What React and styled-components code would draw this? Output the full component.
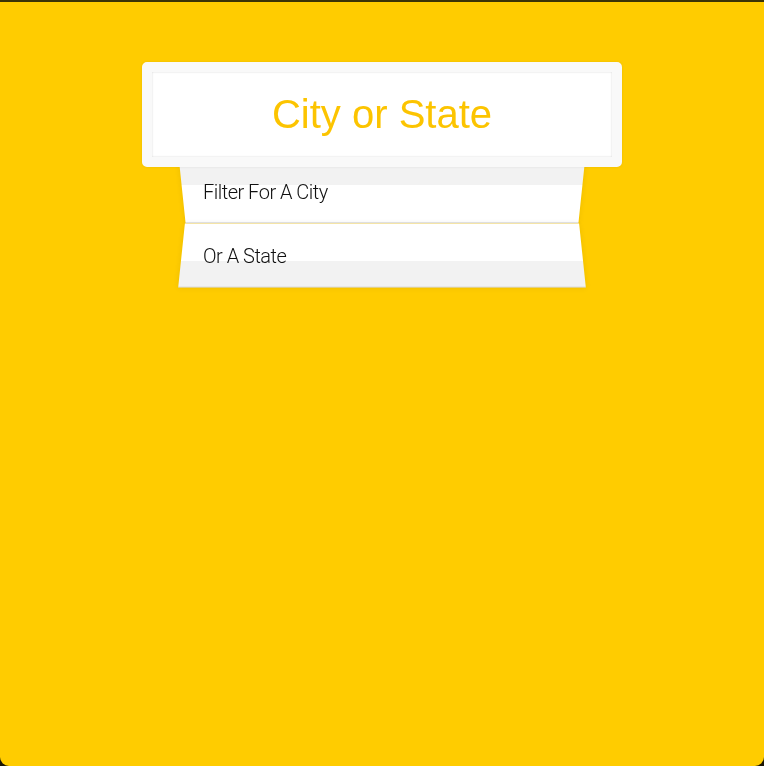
import React from 'react';
import styled, { createGlobalStyle } from 'styled-components';

const GlobalStyle = createGlobalStyle`
  *, *::before, *::after { box-sizing: border-box; }
  html {
    background: #1c1604;
  }
  body {
    margin: 0;
    font-family: "Liberation Sans", Arial, sans-serif;
    font-size: 20px;
    font-weight: 200;
  }
`;

const Frame = styled.div`
  height: 766px;
  background: #ffcc00;
  border-top: 2px solid #3b3306;
  border-radius: 0 0 9px 9px;
  padding-top: 50px;
  overflow: hidden;
`;

const SearchForm = styled.form`
  max-width: 400px;
  margin: 0 auto;
`;

const SearchInput = styled.input`
  display: block;
  position: relative;
  z-index: 2;
  width: 120%;
  margin: 10px -10% -10px;
  padding: 20px;
  text-align: center;
  outline: 0;
  border: 10px solid #f9f9f9;
  border-radius: 5px;
  background: #fff;
  font-family: "Liberation Sans", Arial, sans-serif;
  font-size: 40px;
  box-shadow: 0 0 3px rgba(0, 0, 0, 0.08), inset 0 0 2px rgba(0, 0, 0, 0.19);

  &::placeholder {
    color: #fcc400;
    opacity: 1;
  }
`;

const Suggestions = styled.ul`
  margin: 0;
  padding: 0;
  position: relative;
`;

// the folded paper is drawn on ::before so the text itself stays flat
const Suggestion = styled.li`
  position: relative;
  isolation: isolate;
  list-style: none;
  margin: 0;
  padding: 24px 21px 17px;
  display: flex;
  justify-content: space-between;
  text-transform: capitalize;
  font-family: Roboto, "Liberation Sans", sans-serif;
  font-weight: 300;
  letter-spacing: -0.5px;
  color: #111;
  line-height: 23px;

  &::before {
    content: '';
    position: absolute;
    inset: 0;
    z-index: -1;
    border-bottom: 1px solid #d8d8d8;
    box-shadow: 0 0 6px rgba(0, 0, 0, 0.08);
    background: ${p => p.$even
      ? 'linear-gradient(to bottom, #ffffff 60%, #f2f2f2 61%)'
      : 'linear-gradient(to top, #ffffff 60%, #f2f2f2 61%)'};
    transform: ${p => p.$even
      ? 'perspective(100px) rotateX(3deg) translateY(2px) scale(1.001)'
      : 'perspective(100px) rotateX(-3deg) translateY(3px)'};
  }
`;

const items = ['Filter for a city', 'or a state'];

const App = () => {
  return (
    <>
      <GlobalStyle />
      <Frame>
        <SearchForm onSubmit={e => e.preventDefault()}>
          <SearchInput type="text" placeholder="City or State" />
          <Suggestions>
            {items.map((item, i) => (
              <Suggestion key={item} $even={i % 2 === 1}>{item}</Suggestion>
            ))}
          </Suggestions>
        </SearchForm>
      </Frame>
    </>
  );
};

export default App;
